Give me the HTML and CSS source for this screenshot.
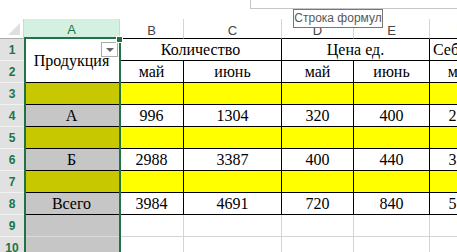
FILE: index.html
```html
<!DOCTYPE html>
<html>
<head>
    <title>Лист1</title>
    <link rel="stylesheet" href="styles.css">
</head>
<body>

<div class="app">
    <div class="topbar">
        <div class="formula-box"></div>
    </div>

    <div class="sheet">
        <!-- заголовки столбцов -->
        <div class="corner"><span class="corner-tri"></span></div>
        <div class="col-hdr active">A</div>
        <div class="col-hdr">B</div>
        <div class="col-hdr">C</div>
        <div class="col-hdr">D</div>
        <div class="col-hdr">E</div>
        <div class="col-hdr">F</div>
        <div class="col-hdr">G</div>

        <!-- строки 1-2 -->
        <div class="row-hdr">1</div>
        <div class="cell a-cell a-head">
            Продукция
            <span class="filter-btn"></span>
        </div>
        <div class="cell span2">Количество</div>
        <div class="cell span2">Цена ед.</div>
        <div class="cell span2 left">Себестоимость</div>

        <div class="row-hdr">2</div>
        <div class="cell">май</div>
        <div class="cell">июнь</div>
        <div class="cell">май</div>
        <div class="cell">июнь</div>
        <div class="cell">май</div>
        <div class="cell">июнь</div>

        <!-- строка 3 -->
        <div class="row-hdr">3</div>
        <div class="cell a-cell olive"></div>
        <div class="cell yellow"></div>
        <div class="cell yellow"></div>
        <div class="cell yellow"></div>
        <div class="cell yellow"></div>
        <div class="cell yellow"></div>
        <div class="cell yellow"></div>

        <!-- строка 4 -->
        <div class="row-hdr">4</div>
        <div class="cell a-cell gray">А</div>
        <div class="cell">996</div>
        <div class="cell">1304</div>
        <div class="cell">320</div>
        <div class="cell">400</div>
        <div class="cell">250</div>
        <div class="cell">310</div>

        <!-- строка 5 -->
        <div class="row-hdr">5</div>
        <div class="cell a-cell olive"></div>
        <div class="cell yellow"></div>
        <div class="cell yellow"></div>
        <div class="cell yellow"></div>
        <div class="cell yellow"></div>
        <div class="cell yellow"></div>
        <div class="cell yellow"></div>

        <!-- строка 6 -->
        <div class="row-hdr">6</div>
        <div class="cell a-cell gray">Б</div>
        <div class="cell">2988</div>
        <div class="cell">3387</div>
        <div class="cell">400</div>
        <div class="cell">440</div>
        <div class="cell">320</div>
        <div class="cell">350</div>

        <!-- строка 7 -->
        <div class="row-hdr">7</div>
        <div class="cell a-cell olive"></div>
        <div class="cell yellow"></div>
        <div class="cell yellow"></div>
        <div class="cell yellow"></div>
        <div class="cell yellow"></div>
        <div class="cell yellow"></div>
        <div class="cell yellow"></div>

        <!-- строка 8 -->
        <div class="row-hdr">8</div>
        <div class="cell a-cell gray">Всего</div>
        <div class="cell">3984</div>
        <div class="cell">4691</div>
        <div class="cell">720</div>
        <div class="cell">840</div>
        <div class="cell">570</div>
        <div class="cell">660</div>

        <!-- пустые строки -->
        <div class="row-hdr">9</div>
        <div class="cell a-cell gray empty"></div>
        <div class="cell empty"></div>
        <div class="cell empty"></div>
        <div class="cell empty"></div>
        <div class="cell empty"></div>
        <div class="cell empty"></div>
        <div class="cell empty"></div>

        <div class="row-hdr">10</div>
        <div class="cell a-cell gray empty"></div>
        <div class="cell empty"></div>
        <div class="cell empty"></div>
        <div class="cell empty"></div>
        <div class="cell empty"></div>
        <div class="cell empty"></div>
        <div class="cell empty"></div>

        <div class="selection"><span class="sel-handle"></span></div>
    </div>

    <div class="tooltip">Строка формул</div>
</div>

</body>
</html>
```

FILE: styles.css
```css
body {
    margin: 0;
    background: #ffffff;
    overflow: hidden;
}
.app {
    position: relative;
    width: 457px;
    height: 252px;
    overflow: hidden;
}
.topbar {
    height: 19px;
    display: flex;
    justify-content: flex-end;
}
.formula-box {
    width: 206px;
    height: 8px;
    border-left: 1px solid #c6c6c6;
    border-bottom: 1px solid #c6c6c6;
}
.sheet {
    position: relative;
    display: grid;
    grid-template-columns: 24px 96px 64px 98px 72px 76px 62px 64px;
    grid-template-rows: 20px repeat(10, 22px);
    width: 556px;
    font-family: "Liberation Serif", "Times New Roman", serif;
    font-size: 16px;
    color: #000;
}
.corner {
    position: relative;
    background: #fff;
    border-right: 1px solid #d4d4d4;
    border-bottom: 1px solid #ababab;
}
.corner-tri {
    position: absolute;
    right: 3px;
    bottom: 3px;
    width: 0;
    height: 0;
    border-left: 12px solid transparent;
    border-bottom: 12px solid #dfdfdf;
}
.col-hdr {
    display: flex;
    align-items: center;
    justify-content: center;
    font-family: "Liberation Sans", Arial, sans-serif;
    font-size: 13px;
    color: #444;
    background: #fff;
    border-right: 1px solid #d4d4d4;
    border-bottom: 1px solid #000;
    box-sizing: border-box;
    padding-top: 3px;
}
.col-hdr.active {
    background: #d3f0e0;
    color: #217346;
    border-bottom: 2px solid #217346;
}
.row-hdr {
    display: flex;
    align-items: center;
    justify-content: center;
    font-family: "Liberation Sans", Arial, sans-serif;
    font-size: 12px;
    font-weight: bold;
    color: #217346;
    background: #e1e1e1;
    border-bottom: 1px solid #f2f2f2;
    box-sizing: border-box;
    padding-top: 1px;
}
.cell {
    display: flex;
    align-items: center;
    justify-content: center;
    white-space: nowrap;
    overflow: hidden;
    border-right: 1px solid #000;
    border-bottom: 1px solid #000;
    box-sizing: border-box;
}
.span2 {
    grid-column: span 2;
}
.left {
    justify-content: flex-start;
    padding-left: 3px;
}
.a-head {
    position: relative;
    grid-row: span 2;
    background: #fff;
}
.filter-btn {
    position: absolute;
    right: 1px;
    top: 3px;
    width: 15px;
    height: 13px;
    background: #fff;
    border: 1px solid #aaaaaa;
}
.filter-btn::after {
    content: "";
    position: absolute;
    left: 4px;
    top: 5px;
    border-left: 4px solid transparent;
    border-right: 4px solid transparent;
    border-top: 4px solid #666;
}
.yellow {
    background: #ffff00;
}
.olive {
    background: #c8c800;
}
.gray {
    background: #c6c6c6;
}
.empty {
    border-right-color: #d4d4d4;
    border-bottom-color: #d4d4d4;
}
.a-cell.empty {
    border-bottom-color: #dadada;
}
.selection {
    position: absolute;
    left: 24px;
    top: 18px;
    width: 97px;
    height: 260px;
    border: 2px solid #217346;
    box-sizing: border-box;
    pointer-events: none;
}
.sel-handle {
    position: absolute;
    right: -4px;
    top: -3px;
    width: 5px;
    height: 5px;
    background: #217346;
    border: 1px solid #fff;
}
.tooltip {
    position: absolute;
    left: 293px;
    top: 9px;
    width: 88px;
    height: 17px;
    border: 1px solid #767676;
    background: #fff;
    font-family: "Liberation Sans", Arial, sans-serif;
    font-size: 12px;
    color: #575757;
    line-height: 17px;
    text-align: center;
}
```
